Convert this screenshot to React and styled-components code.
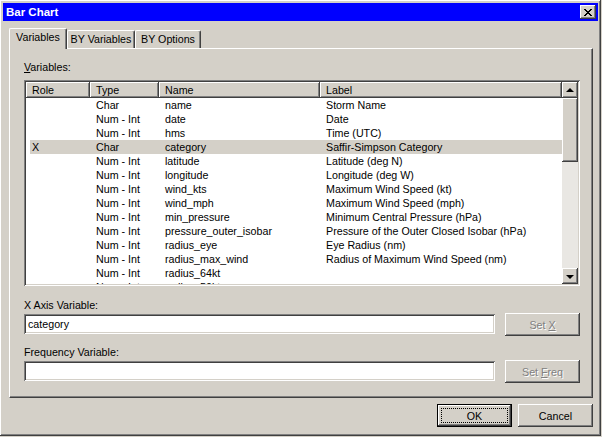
import React from 'react';
import styled, { createGlobalStyle, css } from 'styled-components';

const GlobalStyle = createGlobalStyle`
  html, body {
    margin: 0;
    padding: 0;
    background: #d4d0c8;
  }
  body {
    font-family: "Liberation Sans", Arial, sans-serif;
    font-size: 10.7px;
    color: #000;
  }
  * {
    box-sizing: border-box;
  }
`;

const raised = css`
  background: #d4d0c8;
  box-shadow: inset -1px -1px #404040, inset 1px 1px #ffffff,
    inset -2px -2px #808080, inset 2px 2px #d4d0c8;
`;

const sunken = css`
  box-shadow: inset 1px 1px #808080, inset -1px -1px #ffffff,
    inset 2px 2px #404040, inset -2px -2px #d4d0c8;
`;

const Window = styled.div`
  width: 601px;
  height: 436px;
  padding: 3px;
  display: flex;
  flex-direction: column;
  ${raised};
`;

const TitleBar = styled.div`
  height: 18px;
  background: #0000ff;
  display: flex;
  align-items: center;
  justify-content: space-between;
  padding: 0 2px 0 2px;
`;

const Title = styled.span`
  color: #fff;
  font-weight: bold;
  font-size: 11.5px;
  padding-left: 1px;
`;

const CloseButton = styled.div`
  width: 16px;
  height: 14px;
  display: flex;
  align-items: center;
  justify-content: center;
  ${raised};
  svg {
    display: block;
  }
`;

const Body = styled.div`
  flex: 1;
  display: flex;
  flex-direction: column;
  padding: 7px 5px 0 6px;
`;

const TabStrip = styled.div`
  display: flex;
  align-items: flex-end;
  height: 20px;
  padding-left: 2px;
  position: relative;
  z-index: 1;
`;

const Tab = styled.div`
  width: ${(p) => p.$w}px;
  height: 18px;
  line-height: 16px;
  text-align: center;
  white-space: nowrap;
  background: #d4d0c8;
  border-top: 1px solid #fff;
  border-left: 1px solid #fff;
  border-right: 1px solid #404040;
  box-shadow: inset -1px 0 #808080;
  border-radius: 2px 2px 0 0;
  ${(p) =>
    p.$active &&
    css`
      height: 21px;
      margin: 0 -2px -1px -2px;
      line-height: 17px;
      padding-bottom: 2px;
      position: relative;
      z-index: 2;
      & + * {
        margin-left: 2px;
      }
    `};
`;

const Panel = styled.div`
  height: 350px;
  border-top: 1px solid #fff;
  border-left: 1px solid #fff;
  border-right: 1px solid #404040;
  border-bottom: 1px solid #404040;
  box-shadow: inset -1px -1px #808080;
  padding: 11px 12px 0 14px;
  display: flex;
  flex-direction: column;
`;

const FieldLabel = styled.div`
  height: 14px;
  line-height: 14px;
  margin-bottom: ${(p) => p.$mb || 1}px;
  margin-top: ${(p) => p.$mt || 0}px;
  u {
    text-decoration: underline;
  }
`;

const TableBox = styled.div`
  height: 206px;
  padding: 2px;
  display: flex;
  background: #fff;
  ${sunken};
`;

const ListArea = styled.div`
  flex: 1;
  display: flex;
  flex-direction: column;
  overflow: hidden;
`;

const HeaderRow = styled.div`
  display: grid;
  grid-template-columns: 64px 69px 161px 1fr;
  height: 16px;
  flex: none;
`;

const HeaderCell = styled.div`
  background: #d4d0c8;
  box-shadow: inset -1px -1px #404040, inset 1px 1px #ffffff,
    inset -2px -2px #808080;
  line-height: 16px;
  padding-left: 6px;
`;

const Row = styled.div`
  display: grid;
  grid-template-columns: 60px 69px 161px 1fr;
  margin-left: 4px;
  height: 14px;
  line-height: 14px;
  flex: none;
  white-space: nowrap;
  background: ${(p) => (p.$selected ? '#d4d0c8' : '#fff')};
`;

const Cell = styled.div`
  padding-left: ${(p) => (p.$first ? 2 : 6)}px;
  overflow: hidden;
`;

const ScrollBar = styled.div`
  width: 16px;
  flex: none;
  display: flex;
  flex-direction: column;
  background: #e9e7e3;
`;

const ScrollButton = styled.div`
  width: 16px;
  height: 16px;
  flex: none;
  display: flex;
  align-items: center;
  justify-content: center;
  ${raised};
`;

const Arrow = styled.div`
  width: 0;
  height: 0;
  border-left: 4px solid transparent;
  border-right: 4px solid transparent;
  ${(p) =>
    p.$down
      ? css`
          border-top: 4px solid #000;
          margin-top: 1px;
        `
      : css`
          border-bottom: 4px solid #000;
          margin-bottom: 1px;
        `};
`;

const Thumb = styled.div`
  height: 64px;
  flex: none;
  ${raised};
`;

const Track = styled.div`
  flex: 1;
`;

const InputRow = styled.div`
  display: flex;
  align-items: flex-start;
  gap: 10px;
  height: 23px;
`;

const TextInput = styled.div`
  flex: 1;
  height: 20px;
  margin-top: 1px;
  background: #fff;
  padding: 0 4px;
  line-height: 20px;
  ${sunken};
`;

const Button = styled.div`
  width: 75px;
  height: 23px;
  flex: none;
  display: flex;
  align-items: center;
  justify-content: center;
  position: relative;
  ${raised};
  ${(p) =>
    p.$disabled &&
    css`
      color: #808080;
      text-shadow: 1px 1px #fff;
    `};
  ${(p) =>
    p.$default &&
    css`
      box-shadow: inset 0 0 0 1px #000, inset -2px -2px #404040,
        inset 2px 2px #ffffff, inset -3px -3px #808080;
      &::after {
        content: '';
        position: absolute;
        inset: 4px;
        border: 1px dotted #000;
      }
    `};
  u {
    text-decoration: underline;
  }
`;

const Footer = styled.div`
  display: flex;
  justify-content: flex-end;
  gap: 6px;
  padding-top: 6px;
`;

const rows = [
  ['', 'Char', 'name', 'Storm Name'],
  ['', 'Num - Int', 'date', 'Date'],
  ['', 'Num - Int', 'hms', 'Time (UTC)'],
  ['X', 'Char', 'category', 'Saffir-Simpson Category'],
  ['', 'Num - Int', 'latitude', 'Latitude (deg N)'],
  ['', 'Num - Int', 'longitude', 'Longitude (deg W)'],
  ['', 'Num - Int', 'wind_kts', 'Maximum Wind Speed (kt)'],
  ['', 'Num - Int', 'wind_mph', 'Maximum Wind Speed (mph)'],
  ['', 'Num - Int', 'min_pressure', 'Minimum Central Pressure (hPa)'],
  ['', 'Num - Int', 'pressure_outer_isobar', 'Pressure of the Outer Closed Isobar (hPa)'],
  ['', 'Num - Int', 'radius_eye', 'Eye Radius (nm)'],
  ['', 'Num - Int', 'radius_max_wind', 'Radius of Maximum Wind Speed (nm)'],
  ['', 'Num - Int', 'radius_64kt', ''],
  ['', 'Num - Int', 'radius_50kt', ''],
];

const CloseGlyph = () => (
  <svg width="8" height="7" viewBox="0 0 8 7" shapeRendering="crispEdges">
    <path
      fill="#000"
      d="M0 0h2v1H0zM6 0h2v1H6zM1 1h2v1H1zM5 1h2v1H5zM2 2h4v1H2zM3 3h2v1H3zM2 4h4v1H2zM1 5h2v1H1zM5 5h2v1H5zM0 6h2v1H0zM6 6h2v1H6z"
    />
  </svg>
);

export default function App() {
  return (
    <>
      <GlobalStyle />
      <Window>
        <TitleBar>
          <Title>Bar Chart</Title>
          <CloseButton>
            <CloseGlyph />
          </CloseButton>
        </TitleBar>
        <Body>
          <TabStrip>
            <Tab $active $w={58}>Variables</Tab>
            <Tab $w={68}>BY Variables</Tab>
            <Tab $w={66}>BY Options</Tab>
          </TabStrip>
          <Panel>
            <FieldLabel $mb={6}>
              <u>V</u>ariables:
            </FieldLabel>
            <TableBox>
              <ListArea>
                <HeaderRow>
                  <HeaderCell>Role</HeaderCell>
                  <HeaderCell>Type</HeaderCell>
                  <HeaderCell>Name</HeaderCell>
                  <HeaderCell>Label</HeaderCell>
                </HeaderRow>
                {rows.map((r) => (
                  <Row key={r[2]} $selected={r[0] === 'X'}>
                    <Cell $first>{r[0]}</Cell>
                    <Cell>{r[1]}</Cell>
                    <Cell>{r[2]}</Cell>
                    <Cell>{r[3]}</Cell>
                  </Row>
                ))}
              </ListArea>
              <ScrollBar>
                <ScrollButton>
                  <Arrow />
                </ScrollButton>
                <Thumb />
                <Track />
                <ScrollButton>
                  <Arrow $down />
                </ScrollButton>
              </ScrollBar>
            </TableBox>
            <FieldLabel $mt={12}>X Axis Variable:</FieldLabel>
            <InputRow>
              <TextInput>category</TextInput>
              <Button $disabled>
                Set&nbsp;<u>X</u>
              </Button>
            </InputRow>
            <FieldLabel $mt={9}>Frequency Variable:</FieldLabel>
            <InputRow>
              <TextInput />
              <Button $disabled>
                Set&nbsp;<u>F</u>req
              </Button>
            </InputRow>
          </Panel>
          <Footer>
            <Button $default>OK</Button>
            <Button>Cancel</Button>
          </Footer>
        </Body>
      </Window>
    </>
  );
}
